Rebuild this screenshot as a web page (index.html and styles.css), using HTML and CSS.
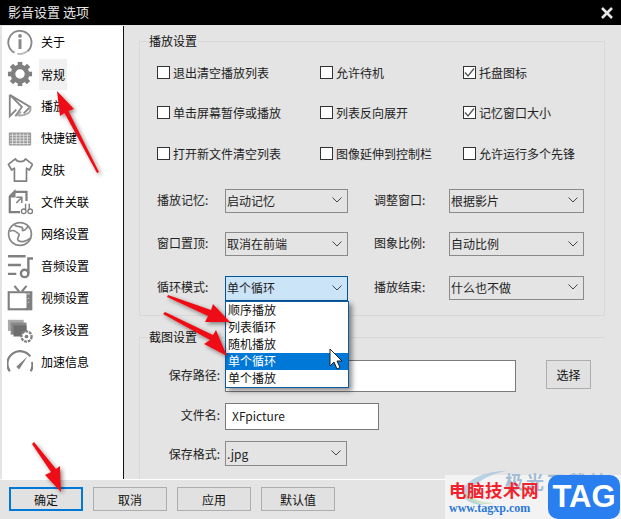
FILE: index.html
```html
<!DOCTYPE html>
<html lang="zh">
<head>
<meta charset="utf-8">
<title>影音设置 选项</title>
<link rel="stylesheet" href="styles.css">
</head>
<body>
<div class="window">
  <header class="titlebar">
    <span class="title">影音设置 选项</span>
    <svg class="close" width="14" height="14" viewBox="0 0 14 14"><path d="M2 2 12 12M12 2 2 12" stroke="#e6e6e6" stroke-width="2.6" fill="none"/></svg>
  </header>
  <div class="body">
    <nav class="sidebar">
      <div class="nav-item"><svg class="nav-icon" viewBox="0 0 28 28"><path d="M8 25.5A12.5 12.5 0 1 1 22 24" fill="none" stroke="#888" stroke-width="2"/><path d="M22 24A12.5 12.5 0 0 1 11 26.5" fill="none" stroke="#bbb" stroke-width="2"/><circle cx="14" cy="7.5" r="2" fill="#888"/><rect x="12.4" y="11" width="3.2" height="10.5" fill="#888"/></svg><span class="nav-label">关于</span></div>
      <div class="nav-item"><svg class="nav-icon" viewBox="0 0 28 28"><circle cx="14" cy="14" r="7.6" fill="none" stroke="#808080" stroke-width="5"/><g fill="#808080"><rect x="11.5" y="1" width="5" height="5"/><rect x="11.5" y="22" width="5" height="5"/><rect x="1" y="11.5" width="5" height="5"/><rect x="22" y="11.5" width="5" height="5"/><rect x="4" y="4" width="5" height="5" transform="rotate(45 6.5 6.5)"/><rect x="19" y="4" width="5" height="5" transform="rotate(45 21.5 6.5)"/><rect x="4" y="19" width="5" height="5" transform="rotate(45 6.5 21.5)"/><rect x="19" y="19" width="5" height="5" transform="rotate(45 21.5 21.5)"/></g></svg><span class="nav-label nav-hover">常规</span></div>
      <div class="nav-item"><svg class="nav-icon" viewBox="0 0 28 28"><path d="M3 2 25 15 18 22M3 2V25L10 18M3 2 16 15 9 25" fill="none" stroke="#888" stroke-width="2"/><path d="M25 15C27 21 20 25 12 24L15 20" fill="none" stroke="#aaa" stroke-width="2"/></svg><span class="nav-label">播放</span></div>
      <div class="nav-item"><svg class="nav-icon" viewBox="0 0 28 28"><rect x="2" y="8" width="24" height="14" rx="1" fill="#999"/><path d="M3 11H25M3 14H25M3 17H25M3 20H25M6 9V21M10 9V21M14 9V21M18 9V21M22 9V21" stroke="#eee" stroke-width=".8"/></svg><span class="nav-label">快捷键</span></div>
      <div class="nav-item"><svg class="nav-icon" viewBox="0 0 28 28"><path d="M9 2 1.500 8 5 14l3-2V26H21V12l3 2 3.500-6L20 2C18 6 11 6 9 2Z" fill="none" stroke="#808080" stroke-width="1.800" stroke-linejoin="round"/></svg><span class="nav-label">皮肤</span></div>
      <div class="nav-item"><svg class="nav-icon" viewBox="0 0 28 28"><path d="M8 3H21V13M14 25H3V8L8 3V8H3" fill="none" stroke="#808080" stroke-width="2.400"/><path d="M10 9h6v6M16 9l-6 6" fill="none" stroke="#808080" stroke-width="1.600"/><circle cx="18" cy="24" r="2.500" fill="none" stroke="#808080" stroke-width="1.500"/><circle cx="25" cy="24" r="2.500" fill="none" stroke="#808080" stroke-width="1.500"/><path d="M20 16V22M24 16V22" stroke="#808080" stroke-width="1.500"/></svg><span class="nav-label">文件关联</span></div>
      <div class="nav-item"><svg class="nav-icon" viewBox="0 0 28 28"><circle cx="14" cy="14" r="12.300" fill="none" stroke="#888" stroke-width="1.800"/><path d="M3 11C7 9 9 11 13 14 14 16 10 18 12 21 17 24 21 21 26 18M8 4C10 7 16 5 17 8 15 11 19 12 23 5" fill="none" stroke="#888" stroke-width="1.800"/></svg><span class="nav-label">网络设置</span></div>
      <div class="nav-item"><svg class="nav-icon" viewBox="0 0 28 28"><path d="M1 3.500H20M1 13H15M1 22.500H10" stroke="#808080" stroke-width="2.600"/><circle cx="19" cy="22" r="4" fill="none" stroke="#808080" stroke-width="2.600"/><path d="M23 22V6H28" fill="none" stroke="#808080" stroke-width="2.600"/></svg><span class="nav-label">音频设置</span></div>
      <div class="nav-item"><svg class="nav-icon" viewBox="0 0 28 28"><path d="M8 1l5 6M21 1l-5 6" stroke="#808080" stroke-width="2.200"/><rect x="2" y="8" width="24" height="18" fill="none" stroke="#808080" stroke-width="2.600"/><rect x="3" y="9" width="17" height="16" fill="#fff"/><rect x="21" y="10" width="4" height="15" fill="#808080"/><path d="M23 14v1M23 18v1" stroke="#fff"/></svg><span class="nav-label">视频设置</span></div>
      <div class="nav-item"><svg class="nav-icon" viewBox="0 0 28 28"><rect x="1" y="3" width="17" height="12" fill="#aaa"/><rect x="4" y="6" width="17" height="13" fill="#888"/><rect x="7" y="9" width="14" height="12" fill="#6e6e6e"/><circle cx="21" cy="21" r="5.500" fill="#fff" stroke="#808080" stroke-width="2.500" stroke-dasharray="3 1"/><circle cx="21" cy="21" r="2" fill="#808080"/></svg><span class="nav-label">多核设置</span></div>
      <div class="nav-item"><svg class="nav-icon" viewBox="0 0 28 28"><path d="M3 24A12.500 12.500 0 0 1 25 8" fill="none" stroke="#808080" stroke-width="2.400"/><path d="M27 14A13 13 0 0 1 25.500 24" fill="none" stroke="#808080" stroke-width="2.400"/><path d="M22 8 10 19 13 22Z" fill="#808080"/></svg><span class="nav-label">加速信息</span></div>
    </nav>
    <main class="content">
      <section class="group group-play">
        <h2 class="legend">播放设置</h2>
        <div class="checks">
          <label class="check"><span class="box"></span>退出清空播放列表</label>
          <label class="check"><span class="box"></span>允许待机</label>
          <label class="check"><span class="box"><svg width="11" height="11" viewBox="0 0 11 11"><path d="M1 5.500 4 9 10 1.500" fill="none" stroke="#555" stroke-width="1.300"/></svg></span>托盘图标</label>
          <label class="check"><span class="box"></span>单击屏幕暂停或播放</label>
          <label class="check"><span class="box"></span>列表反向展开</label>
          <label class="check"><span class="box"><svg width="11" height="11" viewBox="0 0 11 11"><path d="M1 5.500 4 9 10 1.500" fill="none" stroke="#555" stroke-width="1.300"/></svg></span>记忆窗口大小</label>
          <label class="check"><span class="box"></span>打开新文件清空列表</label>
          <label class="check"><span class="box"></span>图像延伸到控制栏</label>
          <label class="check"><span class="box"></span>允许运行多个先锋</label>
        </div>
        <div class="selects">
          <span class="field-label">播放记忆:</span>
          <div class="select">启动记忆<svg class="chev" width="10" height="6" viewBox="0 0 10 6"><path d="M.5.500 5 5 9.500.500" fill="none" stroke="#444"/></svg></div>
          <span class="field-label">调整窗口:</span>
          <div class="select">根据影片<svg class="chev" width="10" height="6" viewBox="0 0 10 6"><path d="M.5.500 5 5 9.500.500" fill="none" stroke="#444"/></svg></div>
          <span class="field-label">窗口置顶:</span>
          <div class="select">取消在前端<svg class="chev" width="10" height="6" viewBox="0 0 10 6"><path d="M.5.500 5 5 9.500.500" fill="none" stroke="#444"/></svg></div>
          <span class="field-label">图象比例:</span>
          <div class="select">自动比例<svg class="chev" width="10" height="6" viewBox="0 0 10 6"><path d="M.5.500 5 5 9.500.500" fill="none" stroke="#444"/></svg></div>
          <span class="field-label">循环模式:</span>
          <div class="select select-open">单个循环<svg class="chev" width="10" height="6" viewBox="0 0 10 6"><path d="M.5.500 5 5 9.500.500" fill="none" stroke="#444"/></svg></div>
          <span class="field-label">播放结束:</span>
          <div class="select">什么也不做<svg class="chev" width="10" height="6" viewBox="0 0 10 6"><path d="M.5.500 5 5 9.500.500" fill="none" stroke="#444"/></svg></div>
        </div>
      </section>
      <section class="group group-shot">
        <h2 class="legend">截图设置</h2>
        <div class="shot-row shot-path">
          <span class="shot-label">保存路径:</span>
          <div class="input input-path"></div>
          <div class="button button-choose">选择</div>
        </div>
        <div class="shot-row shot-name">
          <span class="shot-label">文件名:</span>
          <div class="input input-name">XFpicture</div>
        </div>
        <div class="shot-row shot-format">
          <span class="shot-label">保存格式:</span>
          <div class="select select-format">.jpg<svg class="chev" width="10" height="6" viewBox="0 0 10 6"><path d="M.5.500 5 5 9.500.500" fill="none" stroke="#444"/></svg></div>
        </div>
      </section>
    </main>
  </div>
  <footer class="footer">
    <div class="button button-primary">确定</div>
    <div class="button">取消</div>
    <div class="button">应用</div>
    <div class="button">默认值</div>
  </footer>
</div>

<ul class="dropdown">
  <li>顺序播放</li>
  <li>列表循环</li>
  <li>随机播放</li>
  <li class="active">单个循环</li>
  <li>单个播放</li>
</ul>

<div class="watermark">
  <svg class="wm-swirl" width="50" height="38" viewBox="0 0 50 38"><path d="M46 1C28 1 8 8 3 20 1 28 10 35 24 35 12 32 8 26 12 19 18 10 32 4 46 1Z" fill="#9fc3dd" opacity=".7"/><path d="M4 24C8 32 20 36 34 33 22 33 12 30 8 22Z" fill="#bcdcb4" opacity=".8"/></svg>
  <span class="wm-faint">极光下载站</span>
  <div class="wm-text">
    <span class="wm-cn">电脑技术网</span>
    <span class="wm-url">www.tagxp.com</span>
  </div>
  <span class="wm-tag">TAG</span>
</div>

<svg class="overlay" width="621" height="519" viewBox="0 0 621 519">
  <defs><filter id="sh" x="-30%" y="-30%" width="160%" height="160%"><feDropShadow dx="2" dy="2" stdDeviation="2" flood-color="#000" flood-opacity=".45"/></filter></defs>
  <g fill="#ee0f12" filter="url(#sh)">
    <path d="M57 91 74 109 68.500 111 99 172 97 173 64.500 113 60 116Z"/>
    <path d="M230 322 205 322 208 316 167 297 168 295 211 310 213 304Z"/>
    <path d="M227 356 204 344 210 340 163 314 165 312 213 335 216 330Z"/>
    <path d="M61 492 45 475 51 472 32 444 34 442 56 469 60 466Z"/>
  </g>
  <path d="M330 349V366L334 362 337 369 340 367.500 337 361H342Z" fill="#fff" stroke="#222" stroke-width="1"/>
</svg>
</body>
</html>
```
FILE: styles.css
```css
* { box-sizing: border-box; }
html, body { margin: 0; padding: 0; }
body {
  width: 621px;
  height: 519px;
  overflow: hidden;
  position: relative;
  background: #e4e4e4;
  color: #111;
  font: 12px/17px "Noto Sans CJK SC", "Liberation Sans", sans-serif;
}
.window { display: flex; flex-direction: column; height: 519px; }
.titlebar {
  height: 25px;
  flex: none;
  background: #000;
  color: #e8e8e8;
  display: flex;
  align-items: center;
  justify-content: space-between;
  padding: 0 8px 2px 8px;
  font-size: 13px;
}
.close { margin-top: 2px; margin-right: -1px; }
.body { flex: 1; display: flex; min-height: 0; padding-top: 1px; border-bottom: 1px solid #fff; }
.sidebar {
  width: 122px;
  margin-left: 2px;
  background: #fff;
  border-right: 1px solid #111;
  flex: none;
}
.nav-item { height: 32px; display: flex; align-items: center; padding-left: 5px; gap: 8px; }
.nav-icon { width: 26px; height: 26px; flex: none; }
.nav-label { color: #000; font-size: 12px; padding-bottom: 1px; }
.nav-hover {
  align-self: stretch;
  display: flex;
  align-items: center;
  background: #f0f0f0;
  padding: 0 2px 1px;
  margin: 1px -2px 0;
  white-space: nowrap;
}
.content { flex: 1; min-width: 0; padding: 15px 16px 0 15px; overflow: hidden; }
.group { border: 1px solid #d8d8d8; position: relative; }
.group-play { height: 275px; padding: 20px 0 0 17px; }
.group-shot { height: 160px; margin-top: 21px; border-right: none; padding: 22px 0 0 0; }
.legend {
  position: absolute;
  top: -8px;
  left: 8px;
  margin: 0;
  padding: 0 1px;
  background: #e4e4e4;
  font-size: 12px;
  font-weight: 400;
  line-height: 14px;
}
.checks { display: grid; grid-template-columns: 163px 143px 1fr; grid-auto-rows: 40.500px; }
.check { display: flex; align-items: center; gap: 3px; height: 20px; color: #222; }
.box {
  width: 13px;
  height: 13px;
  border: 1px solid #333;
  background: #fff;
  display: flex;
  align-items: center;
  justify-content: center;
}
.selects {
  display: grid;
  grid-template-columns: 85px 123px 101px 135px;
  grid-auto-rows: 43.500px;
  margin: 5px 0 0 -17px;
  align-items: start;
}
.field-label { padding-left: 17px; line-height: 22px; color: #222; white-space: nowrap; }
.selects .field-label:nth-child(4n+3) { padding-left: 26px; }
.select {
  height: 24px;
  border: 1px solid #8a8a8a;
  background: #e4e4e4;
  color: #222;
  display: flex;
  align-items: center;
  justify-content: space-between;
  padding: 0 5px 1px 1px;
}
.select-open { background: #cce4f7; border: 1.500px solid #005499; height: 25px; }
.shot-row { display: flex; align-items: flex-start; }
.shot-label { width: 85px; text-align: right; padding-right: 5px; color: #222; line-height: 23px; flex: none; }
.shot-path { height: 43px; }
.shot-path .shot-label { line-height: 30px; }
.shot-name { height: 38px; }
.shot-format .shot-label { line-height: 25px; }
.input { background: #fff; border: 1px solid #7a7a7a; padding: 0 6px; line-height: 24px; color: #222; }
.input-path { width: 291px; height: 32px; }
.input-name { width: 154px; height: 27px; }
.select-format { width: 122px; height: 25px; }
.button {
  width: 74px;
  height: 24px;
  border: 1px solid #adadad;
  background: #e1e1e1;
  display: flex;
  align-items: center;
  justify-content: center;
  color: #111;
}
.button-choose { width: 45px; height: 29px; margin-left: 30px; }
.button-primary { border: 2px solid #0078d7; }
.footer { height: 39px; flex: none; display: flex; gap: 10px; padding: 7px 0 0 9px; }
.dropdown {
  position: absolute;
  left: 225px;
  top: 301px;
  width: 124px;
  margin: 0;
  padding: 0;
  list-style: none;
  background: #fff;
  border: 1px solid #0d5a9c;
  box-shadow: 3px 3px 5px rgba(0, 0, 0, .45);
  color: #111;
}
.dropdown li { height: 17px; line-height: 16px; padding-left: 2px; }
.dropdown .active { background: #0078d7; color: #fff; }
.watermark {
  position: absolute;
  left: 445px;
  top: 475px;
  width: 176px;
  height: 44px;
  background: rgba(244, 244, 244, .9);
}
.wm-swirl { position: absolute; left: 15px; top: -5px; }
.wm-faint { position: absolute; left: 60px; top: -6px; color: #a3bcd4; font-size: 18px; line-height: 24px; font-weight: 700; letter-spacing: 3px; white-space: nowrap; }
.wm-text { position: absolute; left: 4px; top: 3px; display: flex; flex-direction: column; }
.wm-cn { color: #f1222c; font-size: 17.500px; font-weight: 700; line-height: 24px; letter-spacing: .5px; white-space: nowrap; }
.wm-url { color: #2b78d8; font: 700 12px/13px "Liberation Serif", serif; white-space: nowrap; }
.wm-tag {
  position: absolute;
  left: 103px;
  top: 0;
  width: 72px;
  height: 44px;
  border-radius: 10px;
  background: #2a7ff0;
  color: #fff;
  font: 700 31px/44px "Liberation Sans", sans-serif;
  text-align: center;
}
.overlay { position: absolute; left: 0; top: 0; pointer-events: none; }
```
